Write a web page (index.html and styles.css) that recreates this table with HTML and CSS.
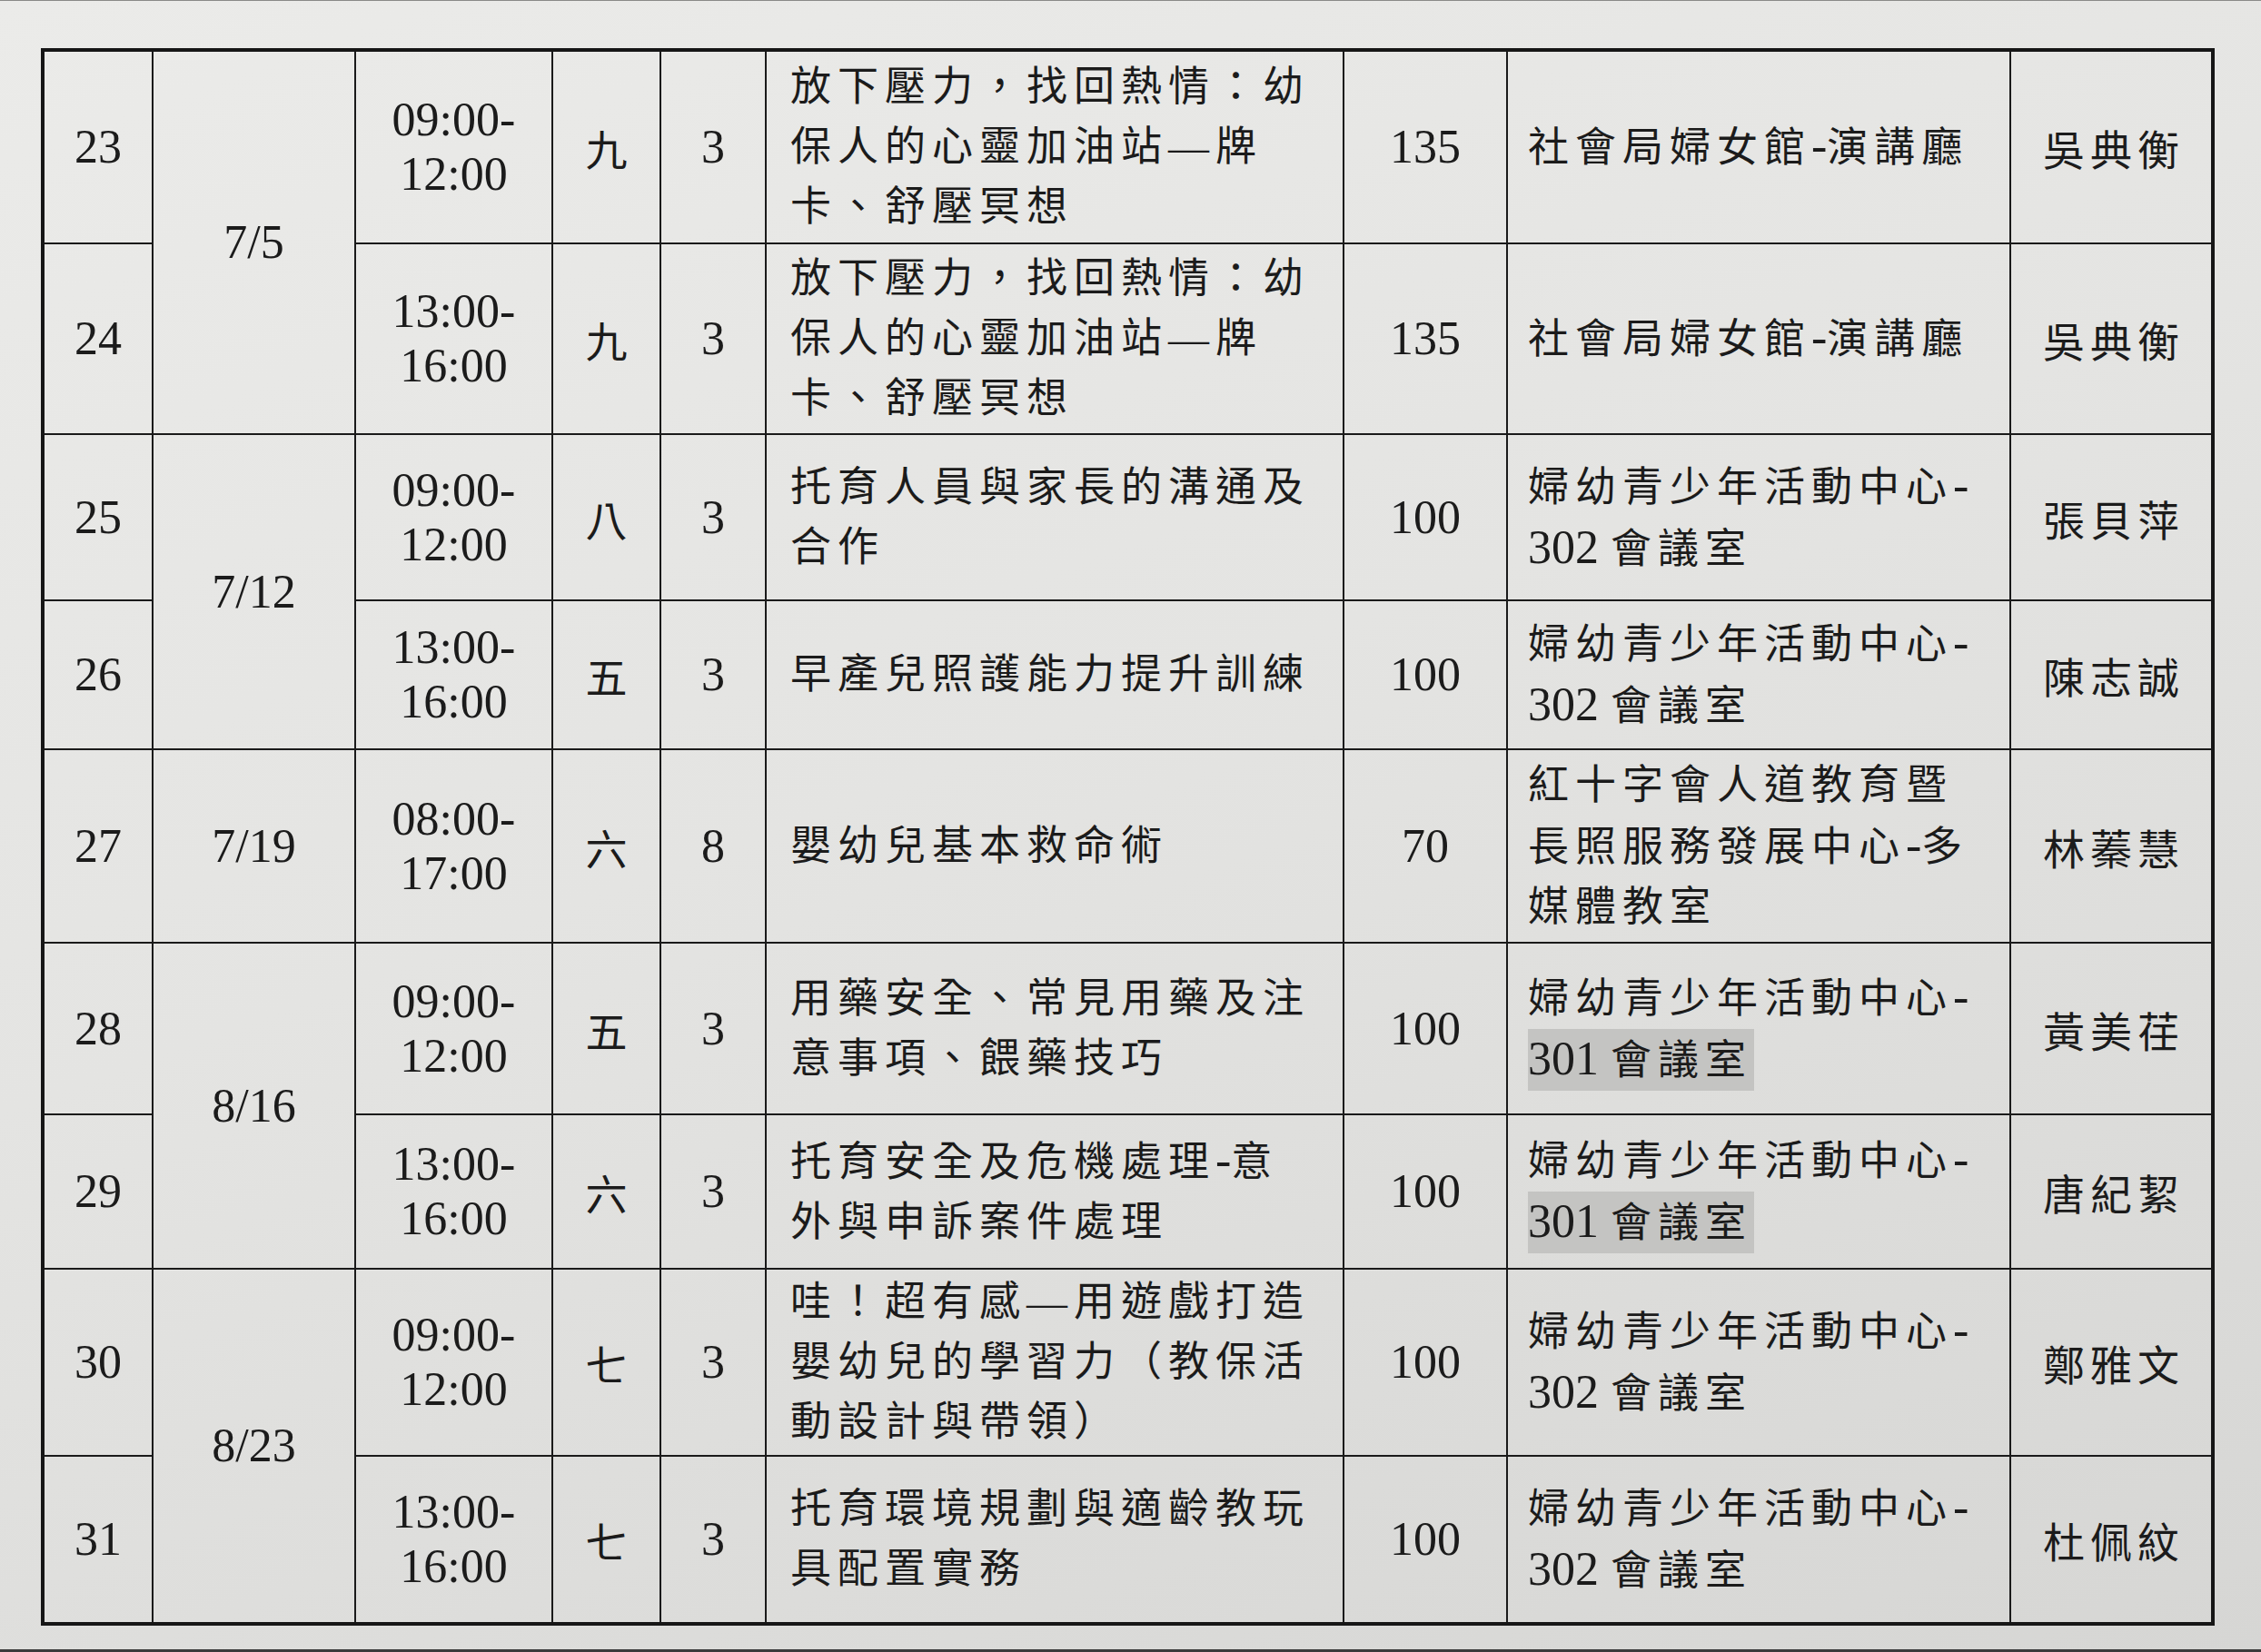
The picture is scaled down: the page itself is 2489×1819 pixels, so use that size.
FILE: index.html
```html
<!DOCTYPE html>
<html lang="zh-Hant">
<head>
<meta charset="utf-8">
<title>課程表</title>
<link rel="stylesheet" href="styles.css">
</head>
<body>
<div class="page">
<table class="sched">
<colgroup>
<col class="c-no"><col class="c-date"><col class="c-time"><col class="c-unit"><col class="c-hr"><col class="c-course"><col class="c-cnt"><col class="c-loc"><col class="c-tch">
</colgroup>
<tbody>
<tr class="r1">
<td class="num">23</td>
<td class="num" rowspan="2">7/5</td>
<td class="time">09:00-<br>12:00</td>
<td class="zh">九</td>
<td class="num">3</td>
<td class="course">放下壓力，找回熱情：幼<br>保人的心靈加油站—牌<br>卡、舒壓冥想</td>
<td class="num">135</td>
<td class="loc">社會局婦女館<span class="lat">-</span>演講廳</td>
<td class="zh">吳典衡</td>
</tr>
<tr class="r2">
<td class="num">24</td>
<td class="time">13:00-<br>16:00</td>
<td class="zh">九</td>
<td class="num">3</td>
<td class="course">放下壓力，找回熱情：幼<br>保人的心靈加油站—牌<br>卡、舒壓冥想</td>
<td class="num">135</td>
<td class="loc">社會局婦女館<span class="lat">-</span>演講廳</td>
<td class="zh">吳典衡</td>
</tr>
<tr class="r3">
<td class="num">25</td>
<td class="num" rowspan="2">7/12</td>
<td class="time">09:00-<br>12:00</td>
<td class="zh">八</td>
<td class="num">3</td>
<td class="course">托育人員與家長的溝通及<br>合作</td>
<td class="num">100</td>
<td class="loc">婦幼青少年活動中心<span class="lat">-</span><br><span class="lat">302 </span>會議室</td>
<td class="zh">張貝萍</td>
</tr>
<tr class="r4">
<td class="num">26</td>
<td class="time">13:00-<br>16:00</td>
<td class="zh">五</td>
<td class="num">3</td>
<td class="course">早產兒照護能力提升訓練</td>
<td class="num">100</td>
<td class="loc">婦幼青少年活動中心<span class="lat">-</span><br><span class="lat">302 </span>會議室</td>
<td class="zh">陳志誠</td>
</tr>
<tr class="r5">
<td class="num">27</td>
<td class="num">7/19</td>
<td class="time">08:00-<br>17:00</td>
<td class="zh">六</td>
<td class="num">8</td>
<td class="course">嬰幼兒基本救命術</td>
<td class="num">70</td>
<td class="loc">紅十字會人道教育暨<br>長照服務發展中心<span class="lat">-</span>多<br>媒體教室</td>
<td class="zh">林蓁慧</td>
</tr>
<tr class="r6">
<td class="num">28</td>
<td class="num" rowspan="2">8/16</td>
<td class="time">09:00-<br>12:00</td>
<td class="zh">五</td>
<td class="num">3</td>
<td class="course">用藥安全、常見用藥及注<br>意事項、餵藥技巧</td>
<td class="num">100</td>
<td class="loc">婦幼青少年活動中心<span class="lat">-</span><br><span class="mark"><span class="lat">301 </span>會議室</span></td>
<td class="zh">黃美荏</td>
</tr>
<tr class="r7">
<td class="num">29</td>
<td class="time">13:00-<br>16:00</td>
<td class="zh">六</td>
<td class="num">3</td>
<td class="course">托育安全及危機處理<span class="lat">-</span>意<br>外與申訴案件處理</td>
<td class="num">100</td>
<td class="loc">婦幼青少年活動中心<span class="lat">-</span><br><span class="mark"><span class="lat">301 </span>會議室</span></td>
<td class="zh">唐紀絜</td>
</tr>
<tr class="r8">
<td class="num">30</td>
<td class="num" rowspan="2">8/23</td>
<td class="time">09:00-<br>12:00</td>
<td class="zh">七</td>
<td class="num">3</td>
<td class="course">哇！超有感—用遊戲打造<br>嬰幼兒的學習力（教保活<br>動設計與帶領）</td>
<td class="num">100</td>
<td class="loc">婦幼青少年活動中心<span class="lat">-</span><br><span class="lat">302 </span>會議室</td>
<td class="zh">鄭雅文</td>
</tr>
<tr class="r9">
<td class="num">31</td>
<td class="time">13:00-<br>16:00</td>
<td class="zh">七</td>
<td class="num">3</td>
<td class="course">托育環境規劃與適齡教玩<br>具配置實務</td>
<td class="num">100</td>
<td class="loc">婦幼青少年活動中心<span class="lat">-</span><br><span class="lat">302 </span>會議室</td>
<td class="zh">杜佩紋</td>
</tr>
</tbody>
</table>
</div>
</body>
</html>
```
FILE: styles.css
```css
html, body {
  margin: 0;
  padding: 0;
}
body {
  width: 2489px;
  height: 1819px;
  overflow: hidden;
}
.page {
  box-sizing: border-box;
  width: 2489px;
  height: 1819px;
  padding: 52px 0 0 45px;
  background: linear-gradient(160deg, #ebebe9 0%, #e4e4e2 45%, #d6d6d4 100%);
  border-top: 1px solid #8a8a88;
  border-bottom: 3px solid #3a3a3a;
  color: #1b1b1b;
  font-family: "Liberation Serif", "Noto Sans CJK TC", serif;
}
.sched {
  border-collapse: collapse;
  table-layout: fixed;
  width: 2389px;
  border: 4px solid #161616;
}
.sched td {
  border: 2px solid #1a1a1a;
  padding: 0;
  vertical-align: middle;
  text-align: center;
}
.c-no { width: 121px; }
.c-date { width: 223px; }
.c-time { width: 217px; }
.c-unit { width: 119px; }
.c-hr { width: 116px; }
.c-course { width: 636px; }
.c-cnt { width: 180px; }
.c-loc { width: 554px; }
.c-tch { width: 223px; }

.r1 { height: 213px; }
.r2 { height: 210px; }
.r3 { height: 183px; }
.r4 { height: 164px; }
.r5 { height: 213px; }
.r6 { height: 189px; }
.r7 { height: 170px; }
.r8 { height: 206px; }
.r9 { height: 185px; }

.sched .num {
  font-size: 52px;
  line-height: 60px;
}
.sched .time {
  font-size: 52px;
  line-height: 60px;
}
.sched .zh {
  font-family: "Noto Sans CJK TC", sans-serif;
  font-size: 46px;
  letter-spacing: 6px;
  line-height: 60px;
  padding-left: 6px;
}
.sched .course,
.sched .loc {
  font-family: "Liberation Serif", "Noto Sans CJK TC", serif;
  font-size: 45px;
  letter-spacing: 7px;
  line-height: 66px;
  text-align: left;
  white-space: nowrap;
}
.sched .course { padding-left: 26px; }
.sched .loc { padding-left: 22px; }
.lat {
  font-family: "Liberation Serif", serif;
  font-size: 52px;
  letter-spacing: 0;
}
.mark {
  display: inline-block;
  background: #c4c4c2;
  line-height: 66px;
  padding-right: 2px;
}
```
